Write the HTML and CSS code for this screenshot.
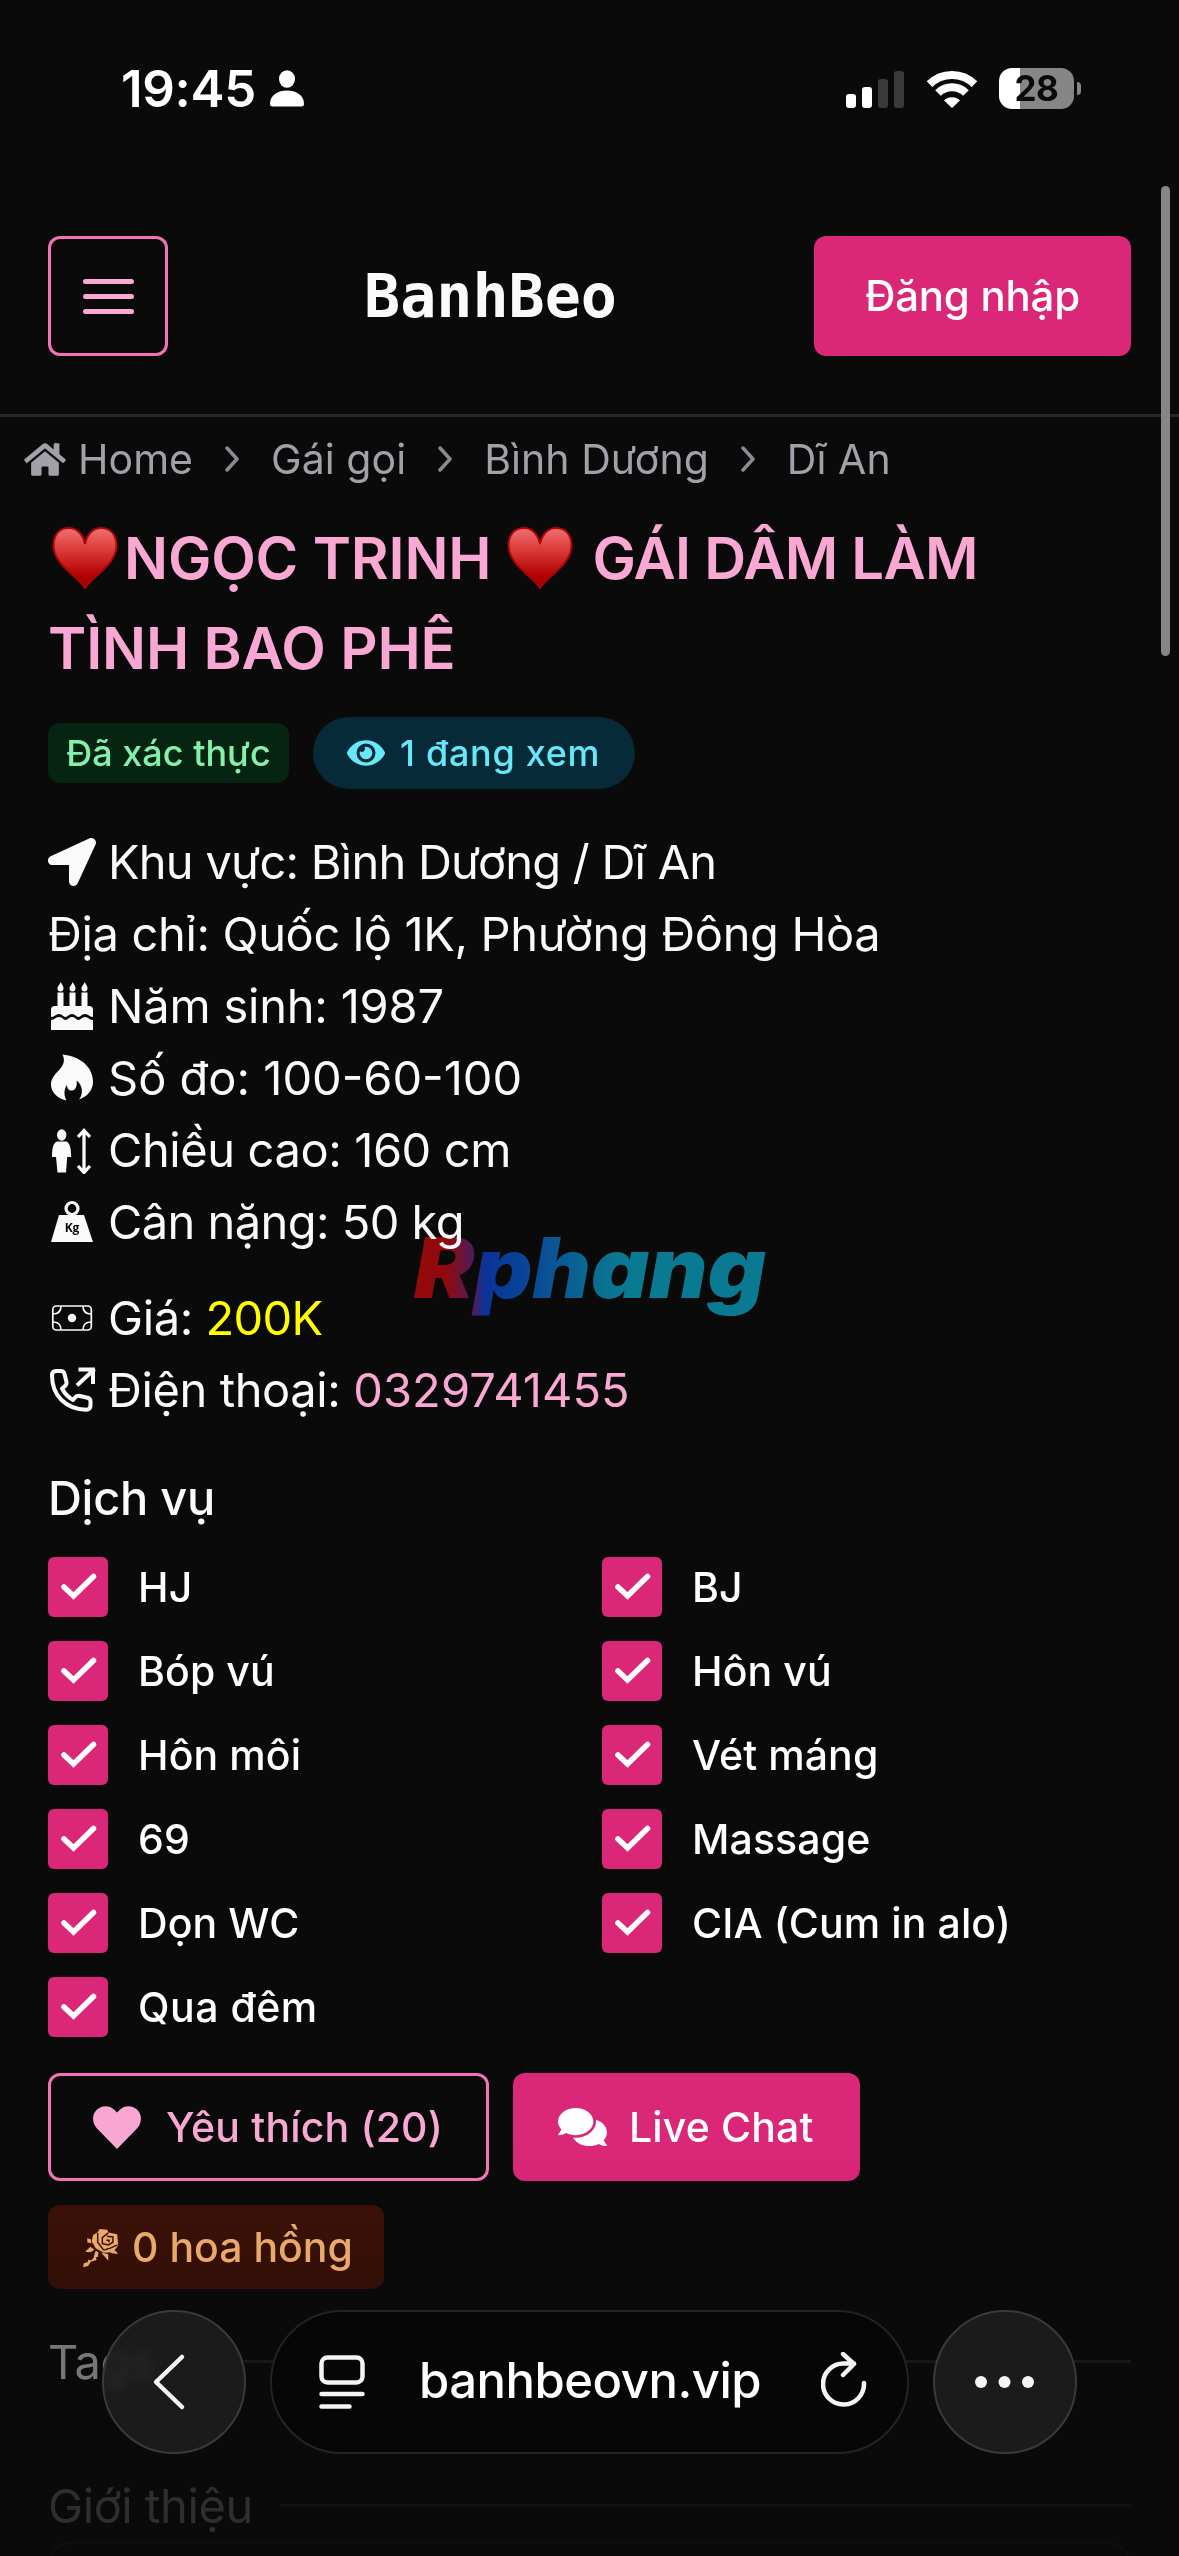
FILE: index.html
```html
<!DOCTYPE html>
<html lang="vi">
<head>
<meta charset="utf-8">
<title>BanhBeo</title>
<link rel="stylesheet" href="styles.css">
</head>
<body>
<svg width="0" height="0" class="defs">
  <defs>
    <linearGradient id="heart-fill" x1="0" y1="0" x2="0" y2="1"><stop offset="0" stop-color="#ef7070"/><stop offset=".35" stop-color="#dd3c3c"/><stop offset=".8" stop-color="#b00000"/><stop offset="1" stop-color="#a00000"/></linearGradient>
    <symbol id="suit" viewBox="0 0 66 62"><path d="M33 61C27 50 1.500 38 1.500 18.500 1.500 7 8 1 17 1 25 1 31 7 33 17 35 7 41 1 49 1 58 1 64.500 7 64.500 18.500 64.500 38 39 50 33 61z" fill="url(#heart-fill)" stroke="#ad0505" stroke-width="2"/></symbol>
    <symbol id="chev" viewBox="0 0 14 26"><path d="M2 2l10 11L2 24" fill="none" stroke="currentColor" stroke-width="3.500" stroke-linecap="round" stroke-linejoin="round"/></symbol>
    <symbol id="tick" viewBox="0 0 60 60"><path d="M16 30l9.500 9L45.500 19.500" fill="none" stroke="#fff" stroke-width="5.500" stroke-linecap="round" stroke-linejoin="miter"/></symbol>
  </defs>
</svg>
<div class="screen">
  <div class="status">
    <span class="time">19:45</span>
    <svg class="person" viewBox="0 0 34 37"><ellipse cx="17" cy="9" rx="8" ry="8.700" fill="#fff"/><path d="M0 34C0 25 8 20.500 17 20.500S34 25 34 34q0 2.500-3 2.500H3Q0 36.500 0 34z" fill="#fff"/></svg>
    <svg class="signal" viewBox="0 0 58 38"><rect x="0" y="24" width="10" height="14" rx="3" fill="#fff"/><rect x="16" y="17" width="10" height="21" rx="3" fill="#fff"/><rect x="32" y="9" width="10" height="29" rx="3" fill="#3a3a3a"/><rect x="48" y="1" width="10" height="37" rx="3" fill="#3a3a3a"/></svg>
    <svg class="wifi" viewBox="0 0 52 38"><g fill="none" stroke="#fff"><path d="M3.500 14.200a32 32 0 0 1 45 0" stroke-width="8"/><path d="M12 23a20 20 0 0 1 28 0" stroke-width="8"/></g><path d="M18 30.500a11.500 11.500 0 0 1 16 0L26 38z" fill="#fff"/></svg>
    <div class="battery">28</div>
    <div class="nub"></div>
  </div>

  <header class="top">
    <div class="menu"><i></i><i></i><i></i></div>
    <div class="brand">BanhBeo</div>
    <div class="login">Đăng nhập</div>
  </header>

  <nav class="crumbs">
    <svg class="home" viewBox="0 0 576 512"><path fill="currentColor" d="M280.370 148.260L96 300.110V464a16 16 0 0 0 16 16l112.060-.290a16 16 0 0 0 15.920-16V368a16 16 0 0 1 16-16h64a16 16 0 0 1 16 16v95.640a16 16 0 0 0 16 16.050L464 480a16 16 0 0 0 16-16V300L295.670 148.260a12.190 12.190 0 0 0-15.300 0zM571.600 251.470L488 182.560V44.050a12 12 0 0 0-12-12h-56a12 12 0 0 0-12 12v72.610L318.470 43a48 48 0 0 0-61 0L4.340 251.470a12 12 0 0 0-1.600 16.900l25.500 31A12 12 0 0 0 45.150 301l235.220-193.740a12.190 12.190 0 0 1 15.300 0L530.900 301a12 12 0 0 0 16.900-1.600l25.500-31a12 12 0 0 0-1.700-16.930z"/></svg>
    <span>Home</span><svg class="sep"><use href="#chev"/></svg><span>Gái gọi</span><svg class="sep"><use href="#chev"/></svg><span>Bình Dương</span><svg class="sep"><use href="#chev"/></svg><span>Dĩ An</span>
  </nav>

  <main>
    <h1><svg class="suit first"><use href="#suit"/></svg>NGỌC TRINH<svg class="suit second"><use href="#suit"/></svg><span class="tight">GÁI DÂM LÀM</span><br>TÌNH BAO PHÊ</h1>

    <div class="badges">
      <span class="verified">Đã xác thực</span>
      <span class="viewers"><svg class="eye" viewBox="0 60 576 392"><path fill="currentColor" d="M572.520 241.400C518.290 135.590 410.930 64 288 64S57.680 135.640 3.480 241.410a32.350 32.350 0 0 0 0 29.190C57.710 376.410 165.070 448 288 448s230.320-71.640 284.520-177.410a32.350 32.350 0 0 0 0-29.190zM288 400a144 144 0 1 1 144-144 143.930 143.930 0 0 1-144 144zm0-240a95.310 95.310 0 0 0-25.310 3.790 47.850 47.850 0 0 1-66.900 66.900A95.780 95.780 0 1 0 288 160z"/></svg>1 đang xem</span>
    </div>

    <ul class="info">
      <li class="region"><svg class="ico" viewBox="0 0 512 512"><path fill="currentColor" d="M444.520 3.520L28.740 195.420c-47.970 22.390-31.980 92.750 19.190 92.750h175.910v175.910c0 51.170 70.360 67.170 92.750 19.190l191.900-415.780c15.990-38.390-25.590-79.970-63.970-63.970z"/></svg><span>Khu vực: Bình Dương / Dĩ An</span></li>
      <li class="address">Địa chỉ: Quốc lộ 1K, Phường Đông Hòa</li>
      <li class="year"><svg class="ico" viewBox="0 0 48 48"><g fill="currentColor"><path d="M12.500 0c2 3 3 4.500 3 6.500a3 3 0 0 1-6 0c0-2.500 2-3 3-6.500zM24.500 0c2 3 3 4.500 3 6.500a3 3 0 0 1-6 0c0-2.500 2-3 3-6.500zM36.500 0c2 3 3 4.500 3 6.500a3 3 0 0 1-6 0c0-2.500 2-3 3-6.500zM9.500 10.500h6v13.500h6V10.500h6v13.500h6V10.500h6v13.500h1.500a4 4 0 0 1 4 4v7c-4 0-4-3-8-3s-4 3-6.500 3-3-3-6.500-3-4 3-6.500 3-3-3-6.500-3-4 3-8 3v-7a4 4 0 0 1 4-4h2.500z"/><path d="M3 38c4 0 4-3 8-3s4 3 6.500 3 3-3 6.500-3 4 3 6.500 3 3-3 6.500-3 4 3 8 3v10H3z"/></g></svg><span>Năm sinh: 1987</span></li>
      <li class="size"><svg class="ico" viewBox="0 0 48 48"><path fill="currentColor" d="M14.500.500C31 2 45 12 45 28c0 8-6 15-14 17.500 4-5 4.500-14-2.500-19 1 4-.5 10-4.500 10-3.500 0-5-2-5-5.500-3 4-3.500 10-.5 15.500C9 44.500 3 38 3 30.500 3 18 21 14 14.500.500z"/></svg><span>Số đo: 100-60-100</span></li>
      <li class="height"><svg class="ico" viewBox="0 0 48 48"><g fill="currentColor"><ellipse cx="13.700" cy="9" rx="4.700" ry="5.800"/><path d="M9 15.500h9.500c3.500 2 4.500 6 4.700 15.500h-4L18 46.500H9.500L8 31H4c.2-9.500 1-13.500 5-15.500z"/></g><path d="M36 6v39M30 11l6-6.500 6 6.500M30 40l6 6.500 6-6.500" fill="none" stroke="currentColor" stroke-width="3.300"/></svg><span>Chiều cao: 160 cm</span></li>
      <li class="weight"><svg class="ico" viewBox="0 0 48 48"><circle cx="24" cy="10.500" r="6" fill="none" stroke="currentColor" stroke-width="3.200"/><path fill="currentColor" d="M11 17h25l9 27H3z"/><text x="24" y="34" text-anchor="middle" class="kg">Kg</text></svg><span>Cân nặng: 50 kg</span></li>
    </ul>
    <ul class="info contact">
      <li class="price"><svg class="ico" viewBox="0 0 48 48"><g fill="none" stroke="currentColor" stroke-width="1.700"><rect x="4.800" y="12" width="38.500" height="24" rx="3.500"/><path d="M5 20c5 0 8-3 8-8M43 20c-5 0-8-3-8-8M5 28c5 0 8 3 8 8M43 28c-5 0-8 3-8 8"/></g><circle cx="24" cy="24" r="4.200" fill="currentColor"/></svg><span>Giá: <b>200K</b></span></li>
      <li class="phone"><svg class="ico" viewBox="0 0 48 48"><g fill="none" stroke="currentColor" stroke-width="4" stroke-linejoin="round"><path d="M8 5h5c2 0 3 1 3.500 3l2 8c.4 2-.3 3-2 4.500l-2.500 2c2.500 5 6 8.500 11 11.500l2.500-2.800c1.300-1.500 2.500-1.700 4.500-1.200l7.500 1.800c2 .5 3 1.700 3 3.500v4c0 3-1.500 4.500-4.500 4.500C18 43 4 30 4 9.500 4 6.500 5 5 8 5z"/><path d="M30.500 18L45 4.500M32.500 3.500h12.500V16" stroke-linecap="square" stroke-linejoin="miter"/></g></svg><span>Điện thoại: <a>0329741455</a></span></li>
    </ul>

    <h2>Dịch vụ</h2>
    <div class="services">
      <div><svg><use href="#tick"/></svg>HJ</div><div><svg><use href="#tick"/></svg>BJ</div>
      <div><svg><use href="#tick"/></svg>Bóp vú</div><div><svg><use href="#tick"/></svg>Hôn vú</div>
      <div><svg><use href="#tick"/></svg>Hôn môi</div><div><svg><use href="#tick"/></svg>Vét máng</div>
      <div><svg><use href="#tick"/></svg>69</div><div><svg><use href="#tick"/></svg>Massage</div>
      <div><svg><use href="#tick"/></svg>Dọn WC</div><div><svg><use href="#tick"/></svg>CIA (Cum in alo)</div>
      <div class="last"><svg><use href="#tick"/></svg>Qua đêm</div>
    </div>

    <div class="actions">
      <div class="fav"><svg viewBox="0 0 48 43"><path fill="currentColor" d="M24 43L4 22.500C-1.500 16.500-1 8 4 3.500c5-4.500 12.500-4.500 17 0l3 3 3-3c4.500-4.500 12-4.500 17 0 5 4.500 5.500 13 0 19z"/></svg>Yêu thích (20)</div>
      <div class="chat"><svg viewBox="0 32 576 448"><path fill="currentColor" d="M416 192c0-88.400-93.100-160-208-160S0 103.600 0 192c0 34.300 14.100 65.900 38 92-13.400 30.200-35.500 54.200-35.800 54.500-2.200 2.300-2.800 5.700-1.500 8.700S4.800 352 8 352c36.600 0 66.900-12.300 88.700-25 32.200 15.700 70.300 25 111.300 25 114.900 0 208-71.600 208-160zm122 220c23.900-26 38-57.700 38-92 0-66.900-53.500-124.200-129.300-148.100.9 6.600 1.300 13.300 1.300 20.100 0 105.900-107.700 192-240 192-10.800 0-21.300-.8-31.700-1.900C207.800 439.600 281.800 480 368 480c41 0 79.100-9.200 111.300-25 21.800 12.700 52.100 25 88.700 25 3.200 0 6.100-1.900 7.300-4.800 1.300-2.900.7-6.300-1.500-8.700-.3-.2-22.400-24.200-35.800-54.500z"/></svg>Live Chat</div>
    </div>
    <div class="roses"><svg viewBox="22 32 108 124"><g fill="currentColor"><path d="M72 38l23 2 3 9 27 5 3 34-16 20-28 2-24-14-12-20 4-20 14-8z"/><path d="M34 66l11 3 2 12-12-2zM28 107l16-15 12 9-12 7zM77 110l21 4v20zM104 111l14-9 10 12z"/><path d="M60 104l8 4-1 14-7 2 3 8-18 5-8 13-15 4 2-12 12-4 2-8 8 3 8-8 2-10z"/></g><path d="M66 50v28l18 24M98 50l-18 14v18l18 4 14-8V62l-18-2M84 102l20-6 22-10M92 72h8v6" fill="none" stroke="#3a1107" stroke-width="4.500"/></svg>0 hoa hồng</div>

    <div class="divider tags">Tags<i></i></div>
    <div class="divider intro">Giới thiệu<i></i></div>
    <div class="card"></div>
  </main>

  <svg class="mark" viewBox="0 -10 370 130">
    <defs><linearGradient id="mark-fill" gradientUnits="userSpaceOnUse" x1="10" x2="360" y1="0" y2="0"><stop offset="0" stop-color="#900000"/><stop offset=".09" stop-color="#8c0003"/><stop offset=".17" stop-color="#431458"/><stop offset=".2" stop-color="#002b94"/><stop offset=".3" stop-color="#003a94"/><stop offset=".5" stop-color="#00648d"/><stop offset=".6" stop-color="#00748e"/><stop offset="1" stop-color="#00748e"/></linearGradient></defs>
    <text x="9" y="79" textLength="352" lengthAdjust="spacingAndGlyphs" fill="url(#mark-fill)">Rphang</text>
  </svg>
  <div class="scrollbar"></div>
  <div class="toolbar">
    <div class="round"><svg viewBox="0 0 144 144"><path d="M80 47L54 72l26 25" fill="none" stroke="#f4f4f4" stroke-width="4.500" stroke-linecap="round" stroke-linejoin="round"/></svg></div>
    <div class="pill">
      <svg class="reader" viewBox="0 0 46 54"><rect x="2.500" y="2.500" width="41" height="25" rx="6" fill="none" stroke="#f4f4f4" stroke-width="4.500"/><path d="M2.500 39h41M2.500 51.500h28" stroke="#f4f4f4" stroke-width="4.500" stroke-linecap="round"/></svg>
      <span>banhbeovn.vip</span>
      <svg class="reload" viewBox="0 0 46 56"><path d="M43 31a20.500 20.500 0 1 1-20-19.500h10M22 2l11 10-11 11" fill="none" stroke="#f4f4f4" stroke-width="4.500" stroke-linecap="round" stroke-linejoin="round"/></svg>
    </div>
    <div class="round"><svg viewBox="0 0 144 144" fill="#f4f4f4"><circle cx="48" cy="72" r="6"/><circle cx="71.500" cy="72" r="6"/><circle cx="95" cy="72" r="6"/></svg></div>
  </div>
</div>
</body>
</html>
```
FILE: styles.css
```css
* { box-sizing: border-box; }
body { margin: 0; background: #0a0a0a; }
svg { display: block; flex: none; }
.defs { position: absolute; }
.screen {
  position: relative; width: 1179px; height: 2556px; overflow: hidden;
  background: #0a0a0a; color: #fafafa;
  font-family: Inter, "Noto Sans", sans-serif; white-space: nowrap;
}

/* status bar */
.status { display: flex; align-items: center; height: 177px; padding: 0 98px 0 121px; }
.time { font-size: 51px; font-weight: 600; color: #fff; line-height: 60px; letter-spacing: -.3px; }
.person { width: 34px; height: 37px; margin-left: 14px; }
.signal { width: 58px; height: 38px; margin-left: auto; }
.wifi { width: 52px; height: 38px; margin-left: 22px; }
.battery {
  width: 75px; height: 41px; margin-left: 21px; border-radius: 13px;
  background: linear-gradient(90deg, #fff 21px, #868686 21px);
  color: #0a0a0a; font-size: 35px; font-weight: 700; line-height: 41px; text-align: center; letter-spacing: -.3px;
}
.nub { width: 4px; height: 13px; margin-left: 3px; background: #868686; border-radius: 0 4px 4px 0; }

/* site header */
.top {
  display: flex; align-items: center; justify-content: space-between;
  height: 240px; padding: 0 48px; border-bottom: 3px solid #27272a;
}
.menu {
  display: flex; flex-direction: column; align-items: center; justify-content: center; gap: 10px;
  width: 120px; height: 120px; padding-top: 2px; border: 3px solid #f472b6; border-radius: 12px;
}
.menu i { width: 51px; height: 5px; border-radius: 3px; background: #f9a8d4; }
.brand { font: 700 60px/72px "DejaVu Sans Mono", monospace; margin-right: 1px; }
.login {
  width: 317px; height: 120px; border-radius: 12px; background: #db2777; color: #fff;
  font-size: 42px; font-weight: 500; line-height: 120px; text-align: center; letter-spacing: -.25px;
}

/* breadcrumb */
.crumbs { display: flex; align-items: center; height: 84px; padding-left: 24px; font-size: 41px; letter-spacing: .05px; color: #a1a1aa; }
.home { width: 42px; height: 37px; margin-right: 12px; }
.sep { width: 14px; height: 26px; margin: 0 32px; color: #8b8b93; }

main { padding: 0 48px; }
h1 { margin: 12px 0 0; font-size: 58px; font-weight: 600; line-height: 90px; letter-spacing: -.15px; color: #f9a8d4; }
.suit { display: inline-block; width: 66px; height: 62px; vertical-align: -10px; }
.suit.first { margin: 0 6px 0 4px; }
.suit.second { margin: 0 19px 0 16px; }
.tight { letter-spacing: -.7px; }

.badges { display: flex; align-items: center; gap: 24px; margin-top: 24px; height: 72px; font-size: 36px; font-weight: 500; }
.verified { width: 241px; height: 60px; border-radius: 12px; background: #052512; color: #86efac; line-height: 60px; text-align: center; }
.viewers { display: flex; align-items: center; width: 322px; height: 72px; padding-left: 34px; border-radius: 36px; background: #062a38; color: #67e8f9; letter-spacing: .7px; }
.eye { width: 38px; height: 26px; margin-right: 15px; }

/* details */
.info { list-style: none; margin: 37px 0 0; padding: 0; font-size: 47px; line-height: 72px; letter-spacing: -.4px; }
.info li { display: flex; align-items: center; height: 72px; }
.ico { width: 48px; height: 48px; margin-right: 12px; }
.region { letter-spacing: -.75px; }
.address { letter-spacing: -.35px; }
.year { letter-spacing: -.2px; }
.size { letter-spacing: 0; }
.weight { letter-spacing: -.55px; }
.kg { font: 700 12px "Open Sans", sans-serif; fill: #0a0a0a; letter-spacing: 0; }
.contact { margin-top: 24px; }
.price b { font-weight: 400; color: #ff0; letter-spacing: -.7px; }
.phone a { color: #f9a8d4; letter-spacing: .1px; }

h2 { margin: 36px 0 23px; font-size: 47px; font-weight: 500; line-height: 72px; letter-spacing: -.3px; }
.services { display: grid; grid-template-columns: 554px 1fr; row-gap: 24px; }
.services div { display: flex; align-items: center; height: 60px; font-size: 41px; font-weight: 500; color: #fff; letter-spacing: .1px; }
.services .last { letter-spacing: .5px; }
.services svg { width: 60px; height: 60px; margin-right: 30px; border-radius: 6px; background: #db2777; }

.actions { display: flex; gap: 24px; margin-top: 36px; font-size: 41px; font-weight: 500; letter-spacing: .15px; }
.actions div { display: flex; align-items: center; height: 108px; border-radius: 12px; }
.fav { width: 441px; padding-left: 42px; border: 3px solid #f472b6; color: #f9a8d4; }
.fav svg { width: 48px; height: 43px; margin-right: 25px; }
.chat { width: 347px; padding-left: 45px; background: linear-gradient(#db2777 60%, #d72675); color: #fff; }
.chat svg { width: 49px; height: 38px; margin-right: 22px; }
.roses {
  display: flex; align-items: center; width: 336px; height: 84px; margin-top: 24px; padding-left: 35px;
  border-radius: 12px; background: linear-gradient(#3b1107, #320f07); color: #e9a96a; font-size: 41px; font-weight: 500;
}
.roses svg { width: 36px; height: 41px; margin-right: 13px; }

.divider { display: flex; align-items: center; gap: 27px; height: 72px; font-size: 47px; letter-spacing: -.4px; }
.divider i { flex: 1; height: 3px; background: currentColor; }
.tags { margin-top: 36px; color: #777; }
.tags i { background: #171717; }
.intro { margin-top: 72px; color: #2e2e2e; }
.intro i { background: #101010; }
.card { height: 60px; border: 3px solid #0e0e0e; border-radius: 24px; }

/* layers over the page */
.mark { position: absolute; left: 405px; top: 1209px; width: 370px; height: 130px; mix-blend-mode: screen; }
.mark text { font: italic 900 84px Inter, sans-serif; }
.scrollbar { position: absolute; left: 1161px; top: 186px; width: 9px; height: 470px; border-radius: 5px; background: #868686; }
.toolbar { position: absolute; left: 102px; top: 2310px; display: flex; gap: 24px; }
.round { width: 144px; height: 144px; border-radius: 50%; background: rgba(30, 30, 30, .87); border: 2px solid #3a3a3a; backdrop-filter: blur(5px); }
.round svg { width: 144px; height: 144px; margin: -2px; }
.pill { display: flex; align-items: center; width: 639px; height: 144px; padding-left: 47px; border: 2px solid #232323; border-radius: 72px; background: #060606; }
.pill span { margin: -3px 0 0 54px; font-size: 49px; font-weight: 500; color: #fff; letter-spacing: -.5px; }
.reader { width: 46px; height: 54px; }
.reload { width: 46px; height: 56px; margin-left: 60px; margin-top: -4px; }
```
